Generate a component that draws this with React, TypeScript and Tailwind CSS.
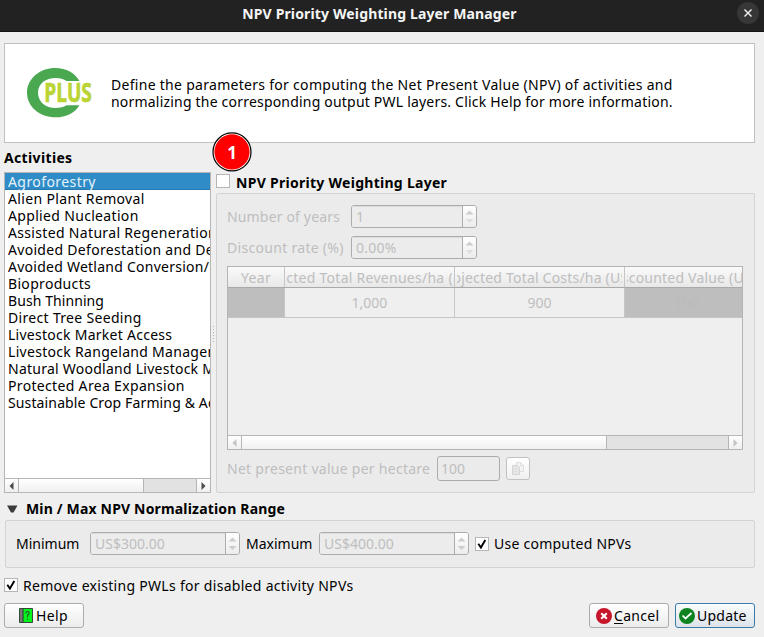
import type { ReactNode } from "react";

const activities = [
  { name: "Agroforestry", tracking: "tracking-[0.42px]" },
  { name: "Alien Plant Removal", tracking: "tracking-[0.35px]" },
  { name: "Applied Nucleation", tracking: "tracking-[0.33px]" },
  { name: "Assisted Natural Regeneration", tracking: "tracking-[0.33px]" },
  { name: "Avoided Deforestation and Degradation", tracking: "tracking-[0.3px]" },
  { name: "Avoided Wetland Conversion/Restoration", tracking: "tracking-[0.25px]" },
  { name: "Bioproducts", tracking: "tracking-[0.32px]" },
  { name: "Bush Thinning", tracking: "tracking-[0.08px]" },
  { name: "Direct Tree Seeding", tracking: "tracking-[0.32px]" },
  { name: "Livestock Market Access", tracking: "tracking-[0.27px]" },
  { name: "Livestock Rangeland Management", tracking: "tracking-[0.3px]" },
  { name: "Natural Woodland Livestock Management", tracking: "tracking-[0.25px]" },
  { name: "Protected Area Expansion", tracking: "tracking-[0.33px]" },
  { name: "Sustainable Crop Farming & Aquaculture", tracking: "tracking-[0.13px]" },
];

function Label({ children, className = "" }: { children: ReactNode; className?: string }) {
  return <span className={`block shrink-0 whitespace-nowrap ${className}`}>{children}</span>;
}

function CheckBox({ checked = false }: { checked?: boolean }) {
  return (
    <span className="flex size-[14px] shrink-0 items-center justify-center border border-[#b6b6b6] bg-white">
      {checked && (
        <svg width="10" height="10" viewBox="0 0 10 10" fill="none" stroke="#000">
          <path d="M1.3 4.8 3.9 8.6 8.3 1" strokeWidth="1.9" />
        </svg>
      )}
    </span>
  );
}

function SpinBox({ value, className, downColor = "#cdcdcd" }: { value: string; className: string; downColor?: string }) {
  return (
    <div className={`flex h-[23px] shrink-0 overflow-hidden rounded-[3px] border border-[#acacac] ${className}`}>
      <div className="flex-1 border-t border-[#dcdcdc] bg-[#ececec] pl-[4px] leading-[20px] text-[#bebebe]">
        <Label>{value}</Label>
      </div>
      <div className="flex w-[14px] flex-col items-center justify-center border-l border-[#acacac] bg-linear-to-b from-white to-[#ececec]">
        <svg width="9" height="15" viewBox="0 0 9 15">
          <path d="M0.5 5.5h8L4.5 1.5z" fill="#cdcdcd" />
          <path d="M0.5 10h8L4.500 14z" fill={downColor} />
        </svg>
      </div>
    </div>
  );
}

function ScrollBar({ thumb, color }: { thumb: string; color: string }) {
  return (
    <div className="flex h-[14px] shrink-0 border-t border-[#b6b6b6] bg-[#e2e2e2]">
      <div className="flex w-[14px] items-center justify-center border-r border-[#b6b6b6] bg-linear-to-b from-white to-[#f0f0f0]">
        <svg width="5" height="8" viewBox="0 0 5 8" fill={color}><path d="M4.5 0v8L0.5 4z" /></svg>
      </div>
      <div className={`border-r border-[#b6b6b6] bg-linear-to-b from-white to-[#f0f0f0] ${thumb}`} />
      <div className="ml-auto flex w-[14px] items-center justify-center border-l border-[#b6b6b6] bg-linear-to-b from-white to-[#f0f0f0]">
        <svg width="5" height="8" viewBox="0 0 5 8" fill={color}><path d="M0.5 0v8l4-4z" /></svg>
      </div>
    </div>
  );
}

function HeaderCell({ children, className }: { children: ReactNode; className: string }) {
  return (
    <div className={`flex h-full shrink-0 items-center justify-center overflow-hidden px-[2px] leading-[22px] ${className}`}>
      <div className="flex h-[20px] min-w-0 flex-1 justify-center overflow-hidden">{children}</div>
    </div>
  );
}

function Logo() {
  return (
    <svg width="68" height="52" viewBox="0 0 68 52">
      <path
        fill="#4aa850"
        d="M53.500 14C48.500 6 40.500 1 29.500 1 14 1 1 11.500 1 25.700S14 50.300 29.500 50.300C40.500 50.300 48.500 46 53.500 38.200H40.500C37.800 40 34 41 29.500 41 20 41 12 35 12 25.700S20 11 29.500 11C34 11 37.800 12.200 40.500 14Z"
      />
      <g transform="translate(18.200 35.300) scale(0.78 1)">
        <text
          textLength="61"
          lengthAdjust="spacingAndGlyphs"
          fill="#b9d433"
          stroke="#b9d433"
          strokeWidth="0.7"
          className="font-['Open_Sans',sans-serif] text-[26px] font-bold"
        >
          PLUS
        </text>
      </g>
    </svg>
  );
}

const button =
  "flex h-[25px] w-[80px] items-center rounded-[3px] border bg-linear-to-b";

export default function App() {
  return (
    <div className="flex h-[637px] w-[764px] flex-col overflow-hidden bg-[#efefef] font-['Noto_Sans',sans-serif] text-[14px] leading-[17px] text-black">
      <header className="flex h-[32px] shrink-0 items-center border-b border-[#141414] bg-[#222222] pr-[5px]">
        <span className="w-[22px]" />
        <div className="flex flex-1 justify-center pb-[5px] font-bold text-[#f5f5f5]">
          <Label className="tracking-[0.14px]">NPV Priority Weighting Layer Manager</Label>
        </div>
        <span className="mb-[5px] flex size-[22px] items-center justify-center rounded-full bg-[#373737]">
          <svg width="8" height="8" viewBox="0 0 8 8" stroke="#f5f5f5" strokeWidth="1.4">
            <path d="M0.500 0.500 7.500 7.500M7.500 0.500 0.500 7.500" />
          </svg>
        </span>
      </header>

      <main className="flex flex-1 flex-col pt-[11px] pr-[9px] pl-[4px]">
        <section className="flex h-[100px] shrink-0 items-center border border-[#c1c1c1] bg-white pl-[21px]">
          <Logo />
          <div className="ml-[17px]">
            <Label className="tracking-[0.29px]">Define the parameters for computing the Net Present Value (NPV) of activities and</Label>
            <Label className="tracking-[0.2px]">normalizing the corresponding output PWL layers. Click Help for more information.</Label>
          </div>
        </section>

        <div className="flex h-[350px] shrink-0">
          <section className="flex w-[207px] flex-col">
            <h2 className="h-[29px] pt-[6px] font-bold"><Label className="tracking-[0.35px]">Activities</Label></h2>
            <div className="flex flex-1 flex-col border border-[#b6b6b6] bg-white">
              <ul className="flex-1 overflow-hidden">
                {activities.map((a, i) => (
                  <li
                    key={a.name}
                    className={`h-[17px] pl-[3px] ${i === 0 ? "border-b border-[#2578b0] bg-[#308cc6] text-[#e4f3fb]" : ""}`}
                  >
                    <Label className={a.tracking}>{a.name}</Label>
                  </li>
                ))}
              </ul>
              <ScrollBar thumb="w-[125px]" color="#4a4a4a" />
            </div>
          </section>

          <div className="flex w-[5px] flex-col items-center justify-center gap-[2px] pt-[32px]">
            {[0, 1, 2, 3, 4, 5].map((n) => (
              <span key={n} className="size-px bg-[#b0b0b0]" />
            ))}
          </div>

          <section className="relative flex w-[539px] flex-col">
            <svg className="absolute top-[-11px] left-[-4px]" width="40" height="40" viewBox="0 0 40 40">
              <circle cx="20" cy="19.900" r="19" fill="#fff" stroke="#000" strokeWidth="1.200" />
              <circle cx="20" cy="19.900" r="17.600" fill="#fe0000" />
              <text x="20" y="26.500" textAnchor="middle" fill="#fff" className="font-['Noto_Sans',sans-serif] text-[17px] font-bold">1</text>
            </svg>
            <div className="flex h-[50px] items-end gap-[6px] pb-[2px] font-bold">
              <span className="mb-[3px]"><CheckBox /></span>
              <Label className="tracking-[0.28px]">NPV Priority Weighting Layer</Label>
            </div>
            <div className="flex flex-1 flex-col rounded-[2px] border border-[#d3d3d3] bg-[#ebebeb] pt-[11px] pl-[10px] text-[#bebebe]">
              <div className="flex h-[23px] items-center">
                <div className="w-[124px]"><Label className="tracking-[0.16px]">Number of years</Label></div>
                <SpinBox value="1" className="w-[126px]" downColor="#dedede" />
              </div>
              <div className="mt-[8px] flex h-[23px] items-center">
                <div className="w-[124px]"><Label className="tracking-[0.3px]">Discount rate (%)</Label></div>
                <SpinBox value="0.00%" className="w-[126px] tracking-[0.25px]" downColor="#dedede" />
              </div>

              <div className="mt-[7px] flex h-[184px] w-[516px] flex-col overflow-hidden border border-[#b4b4b4] bg-[#efefef]">
                <div className="flex h-[21px] shrink-0 overflow-hidden border-b border-[#a9a9a9] bg-linear-to-b from-[#fafafa] to-[#e8e8e8]">
                  <HeaderCell className="w-[57px] border-r border-[#c6c6c6]"><Label className="tracking-[0.3px]">Year</Label></HeaderCell>
                  <HeaderCell className="w-[170px] border-r border-[#c6c6c6]"><Label className="mr-[4px] tracking-[0.27px]">Projected Total Revenues/ha (US$)</Label></HeaderCell>
                  <HeaderCell className="w-[170px] border-r border-[#c6c6c6]"><Label className="tracking-[0.2px]">Projected Total Costs/ha (US$)</Label></HeaderCell>
                  <HeaderCell className="w-[122px]"><Label className="tracking-[0.2px]">Discounted Value (US$)</Label></HeaderCell>
                </div>
                <div className="flex h-[30px] shrink-0 border-b border-[#c6c6c6] text-center leading-[29px]">
                  <div className="w-[57px] border-r border-[#c6c6c6] bg-[#bebebe]">1</div>
                  <div className="w-[170px] border-r border-[#c6c6c6]">1,000</div>
                  <div className="w-[170px] border-r border-[#c6c6c6]">900</div>
                  <div className="flex-1 bg-[#bebebe] pl-[6px] text-[#bcbcbc]">100</div>
                </div>
                <div className="flex-1" />
                <ScrollBar thumb="w-[365px]" color="#c4c4c4" />
              </div>

              <div className="mt-[6px] flex h-[25px] items-center">
                <div className="w-[210px]"><Label className="tracking-[0.27px]">Net present value per hectare</Label></div>
                <div className="h-[25px] w-[63px] rounded-[3px] border border-[#acacac] pl-[3px] leading-[23px]">100</div>
                <div className="ml-[6px] flex h-[23px] w-[24px] items-center justify-center rounded-[3px] border border-[#c2c2c2] bg-linear-to-b from-white to-[#f0f0f0]">
                  <svg width="14" height="15" viewBox="0 0 14 15" fill="#f4f4f4" stroke="#dedede">
                    <path d="M5.500 1.500h4l3 3v6h-7z" />
                    <path d="M9.500 1.500v3h3" />
                    <path d="M1.500 4.500h5l2 2v7h-7z" fill="#e6e6e6" stroke="#d4d4d4" />
                    <path d="M3 8.500h4M3 10.500h4" />
                  </svg>
                </div>
              </div>
            </div>
          </section>
        </div>

        <h2 className="flex h-[27px] shrink-0 items-center pt-[4px] pl-[3px] font-bold">
          <svg className="mt-px" width="11" height="8" viewBox="0 0 11 8" fill="#3c3c3c">
            <path d="M0 0.500h10.500L6.500 7.500h-2.500z" />
          </svg>
          <Label className="ml-[8px] tracking-[0.17px]">Min / Max NPV Normalization Range</Label>
        </h2>
        <section className="ml-px flex h-[48px] shrink-0 items-center rounded-[2px] border border-[#d3d3d3] bg-[#ebebeb] pb-px pl-[10px]">
          <div className="w-[74px]"><Label>Minimum</Label></div>
          <SpinBox value="US$300.00" className="w-[150px]" />
          <div className="w-[79px] pl-[6px]"><Label>Maximum</Label></div>
          <SpinBox value="US$400.00" className="w-[150px]" />
          <div className="ml-[6px] flex items-center gap-[5px]">
            <CheckBox checked />
            <Label className="tracking-[0.25px]">Use computed NPVs</Label>
          </div>
        </section>

        <div className="mt-[8px] flex h-[18px] shrink-0 items-center gap-[5px]">
          <CheckBox checked />
          <Label className="tracking-[0.3px]">Remove existing PWLs for disabled activity NPVs</Label>
        </div>

        <footer className="mt-[9px] flex gap-[6px]">
          <div className={`${button} mr-auto border-[#acacac] from-white to-[#ececec] pl-[14px]`}>
            <svg width="14" height="15" viewBox="0 0 14 15">
              <path d="M0.500 0.500h13v14h-13z" fill="#00f51c" stroke="#334b35" />
              <path d="M1 1h3v13H1z" fill="#777" />
              <path d="M4 1v13" stroke="#333" />
              <path d="M7 5.500V4.500Q8.700 2.500 10 4.500 10.300 6 8.500 7.500V9M8.500 10.500v1.300" fill="none" stroke="#24572a" strokeWidth="1.100" />
            </svg>
            <Label className="ml-[3px] tracking-[0.4px]">Help</Label>
          </div>
          <div className={`${button} border-[#acacac] from-white to-[#ececec] pl-[6px]`}>
            <svg width="16" height="16" viewBox="0 0 16 16">
              <circle cx="8" cy="8" r="8" fill="#c7162b" />
              <path d="m5.200 5.200 5.600 5.600m0-5.600-5.600 5.600" stroke="#fff" strokeWidth="2" />
            </svg>
            <Label className="ml-[2px] tracking-[0.3px]"><span className="underline underline-offset-[2px]">C</span>ancel</Label>
          </div>
          <div className={`${button} border-[#3a7ca8] from-[#fafcfd] to-[#dce3e9] pl-[3px]`}>
            <svg width="16" height="16" viewBox="0 0 16 16" fill="none">
              <circle cx="8" cy="8" r="8" fill="#0e8420" />
              <path d="m3.500 7.500 3 3 6-5.500" stroke="#fff" strokeWidth="1.700" />
            </svg>
            <Label className="ml-[2px] tracking-[0.25px]">Update</Label>
          </div>
        </footer>
      </main>
    </div>
  );
}
